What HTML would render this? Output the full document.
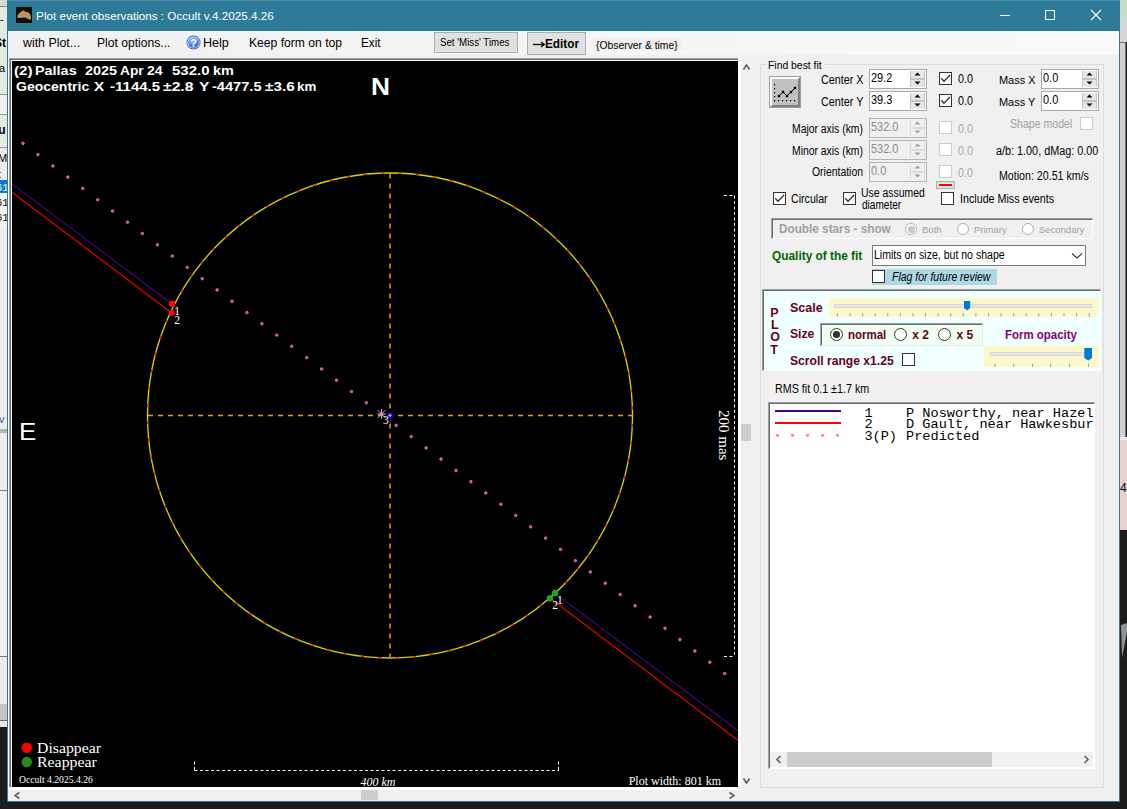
<!DOCTYPE html>
<html><head><meta charset="utf-8">
<style>
*{margin:0;padding:0;box-sizing:border-box}
html,body{width:1127px;height:809px;overflow:hidden;background:#1c1c1c;font-family:"Liberation Sans",sans-serif}
.a{position:absolute}
.t{position:absolute;white-space:pre;line-height:1}
svg.a{overflow:visible}
</style></head><body>
<div class="a" style="left:0px;top:0px;width:7px;height:6px;background:#d8d8d8;"></div>
<div class="a" style="left:0px;top:6px;width:7px;height:1px;background:#8a8a8a;"></div>
<div class="a" style="left:0px;top:7px;width:7px;height:87px;background:#e3ebe1;"></div>
<div class="a" style="left:0px;top:94px;width:7px;height:1px;background:#9a9a9a;"></div>
<div class="a" style="left:0px;top:95px;width:7px;height:19px;background:#efefef;"></div>
<div class="a" style="left:0px;top:114px;width:7px;height:1px;background:#9a9a9a;"></div>
<div class="a" style="left:0px;top:115px;width:7px;height:32px;background:#e3ebe1;"></div>
<div class="a" style="left:0px;top:147px;width:7px;height:1px;background:#9a9a9a;"></div>
<div class="a" style="left:0px;top:148px;width:7px;height:32px;background:#ececec;"></div>
<div class="a" style="left:0px;top:180px;width:7px;height:13px;background:#0a78d0;"></div>
<div class="a" style="left:0px;top:193px;width:7px;height:34px;background:#f4f4f4;"></div>
<div class="a" style="left:0px;top:227px;width:7px;height:202px;background:#eeeeee;"></div>
<div class="a" style="left:0px;top:429px;width:7px;height:4px;background:#b4b4b4;"></div>
<div class="a" style="left:0;top:410px;width:7px;height:16px;overflow:hidden"><div class="t" style="left:-1.0px;top:2.79px;font:normal normal 11px 'Liberation Sans';color:#3a5a9a;">v</div></div>
<div class="a" style="left:0px;top:433px;width:7px;height:57px;background:#ececec;"></div>
<div class="a" style="left:0px;top:490px;width:7px;height:1px;background:#7a7a7a;"></div>
<div class="a" style="left:0px;top:491px;width:7px;height:165px;background:#efefef;"></div>
<div class="a" style="left:0px;top:656px;width:7px;height:1px;background:#7a7a7a;"></div>
<div class="a" style="left:0px;top:657px;width:7px;height:47px;background:#ebebeb;"></div>
<div class="a" style="left:0px;top:704px;width:7px;height:16px;background:#c4c4c4;"></div>
<div class="a" style="left:0px;top:720px;width:7px;height:1px;background:#6a6a6a;"></div>
<div class="a" style="left:0px;top:721px;width:7px;height:6px;background:#e8e8e8;"></div>
<div class="a" style="left:0px;top:727px;width:7px;height:82px;background:#1c1c1c;"></div>
<div class="a" style="left:0;top:0;width:7px;height:240px;overflow:hidden"><div class="t" style="left:-6.0px;top:12.79px;font:normal normal 11px 'Liberation Sans';color:#000;">o-</div><div class="t" style="left:-6.0px;top:35.94px;font:normal bold 12px 'Liberation Sans';color:#000;">St</div><div class="t" style="left:-7.0px;top:61.79px;font:normal normal 11px 'Liberation Sans';color:#000;">pa</div><div class="t" style="left:-5.0px;top:122.94px;font:normal bold 12px 'Liberation Sans';color:#000;">lu</div><div class="t" style="left:-2.0px;top:151.79px;font:normal normal 11px 'Liberation Sans';color:#000;">Ma</div><div class="t" style="left:-3.0px;top:167.79px;font:normal bold 11px 'Liberation Sans';color:#000;">t</div><div class="t" style="left:-4.0px;top:182.05px;font:normal normal 10.5px 'Liberation Mono';color:#fff;">61</div><div class="t" style="left:-4.0px;top:197.05px;font:normal normal 10.5px 'Liberation Mono';color:#000;">61</div><div class="t" style="left:-4.0px;top:212.05px;font:normal normal 10.5px 'Liberation Mono';color:#000;">61</div></div>
<div class="a" style="left:1120px;top:0px;width:7px;height:21px;background:#cadbc6;"></div>
<div class="a" style="left:1120px;top:21px;width:7px;height:21px;background:#d6d6d6;"></div>
<div class="a" style="left:1120px;top:42px;width:6px;height:395px;background:#d2d2d2;border-top:1px solid #707070;border-right:1px solid #707070"></div>
<div class="a" style="left:1120px;top:437px;width:7px;height:3px;background:#ececec;"></div>
<div class="a" style="left:1120px;top:440px;width:7px;height:90px;background:#e6d0d0;"></div>
<div class="a" style="left:1120px;top:470px;width:7px;height:30px;overflow:hidden"><div class="t" style="left:0.0px;top:10.94px;font:normal normal 12px 'Liberation Sans';color:#000;">41</div></div>
<div class="a" style="left:1120px;top:530px;width:7px;height:279px;background:#1c1c1c;"></div>
<svg class="a" style="left:1120px;top:620px" width="7" height="40"><path d="M1 5L7 3V12L2 38Z" fill="#8a9499"/></svg>
<div class="a" style="left:7px;top:0px;width:1113px;height:802px;background:#f0f0f0;border:1px solid #2e7b99;border-top:none"></div>
<div class="a" style="left:7px;top:0px;width:1113px;height:31px;background:#2e7b99;"></div>
<div class="a" style="left:8px;top:31px;width:1111px;height:24px;background:#f5f5f5;background:linear-gradient(90deg,#f0f0f0,#f9f9f9);border-top:1px solid #fdfdfd"></div>
<div class="a" style="left:16px;top:7px;width:16px;height:16px;background:#120d08;"></div>
<svg class="a" style="left:16px;top:7px" width="16" height="16" viewBox="0 0 16 16"><path d="M1.2 9.8C1.5 7.5 4 5 6.5 4C7.3 3.2 8 3 8.6 4.2C9.2 5 10 5 11 4.9C13 5 14.8 7.5 15 10C15 12 14.5 13.2 13.5 12.8C12 12 10.5 10.8 8.5 10.6C6.5 10.5 4.5 11 3 10.9C2 10.9 1.1 10.6 1.2 9.8Z" fill="#b8966c"/></svg>
<div class="a" style="left:7px;top:0px;width:1113px;height:1px;background:#4a8eaa;"></div>
<div class="t" style="left:36.1px;top:8.90px;font:normal normal 11.7px 'Liberation Sans';color:#fff;">Plot event observations : Occult v.4.2025.4.26</div>
<div class="a" style="left:1000px;top:15px;width:10px;height:1px;background:#fff;"></div>
<div class="a" style="left:1045px;top:10px;width:10px;height:10px;border:1px solid #fff"></div>
<svg class="a" style="left:1090px;top:9px" width="12" height="12" viewBox="0 0 12 12"><path d="M1 1L11 11M11 1L1 11" stroke="#fff" stroke-width="1.1"/></svg>
<div class="t" style="left:22.9px;top:35.94px;font:normal normal 12px 'Liberation Sans';color:#000;transform-origin:0 0;transform:scaleX(1.031);">with Plot...</div>
<div class="t" style="left:97.4px;top:35.94px;font:normal normal 12px 'Liberation Sans';color:#000;transform-origin:0 0;transform:scaleX(1.010);">Plot options...</div>
<svg class="a" style="left:186px;top:35px" width="15" height="15" viewBox="0 0 15 15"><defs><radialGradient id="hg" cx="0.4" cy="0.3" r="0.8"><stop offset="0" stop-color="#9cc8ff"/><stop offset="1" stop-color="#1a4fc0"/></radialGradient></defs><circle cx="7.5" cy="7.5" r="7" fill="#3a64c8"/><circle cx="7.5" cy="7.5" r="6.1" fill="#e8f0ff"/><circle cx="7.5" cy="7.5" r="5.3" fill="url(#hg)"/><text x="7.5" y="11.5" font-family="Liberation Sans" font-weight="bold" font-size="11" fill="#fff" text-anchor="middle">?</text></svg>
<div class="t" style="left:203.2px;top:35.94px;font:normal normal 12px 'Liberation Sans';color:#000;transform-origin:0 0;transform:scaleX(1.048);">Help</div>
<div class="t" style="left:249.2px;top:35.94px;font:normal normal 12px 'Liberation Sans';color:#000;transform-origin:0 0;transform:scaleX(1.011);">Keep form on top</div>
<div class="t" style="left:361.0px;top:35.94px;font:normal normal 12px 'Liberation Sans';color:#000;transform-origin:0 0;transform:scaleX(0.974);">Exit</div>
<div class="a" style="left:434px;top:32px;width:84px;height:21px;background:#e1e1e1;border:1px solid #adadad"></div>
<div class="t" style="left:439.9px;top:36.74px;font:normal normal 10px 'Liberation Sans';color:#000;transform-origin:0 0;transform:scaleX(0.969);">Set 'Miss' Times</div>
<div class="a" style="left:527px;top:32px;width:59px;height:23px;background:#e1e1e1;border:1px solid #adadad"></div>
<div class="t" style="left:544.5px;top:36.54px;font:normal bold 12px 'Liberation Sans';color:#000;transform-origin:0 0;transform:scaleX(0.982);">Editor</div>
<svg class="a" style="left:532px;top:39px" width="14" height="11"><path d="M1 5.5H12" stroke="#000" stroke-width="1.3"/><path d="M9 3L12.3 5.5L9 8" stroke="#000" stroke-width="1.3" fill="none"/></svg>
<div class="a" style="left:593px;top:38px;width:89px;height:13px;background:#f0f0f0;"></div>
<div class="t" style="left:596.2px;top:38.31px;font:normal normal 11.8px 'Liberation Sans';color:#000;transform-origin:0 0;transform:scaleX(0.877);">{Observer &amp; time}</div>
<div class="a" style="left:8px;top:58px;width:733px;height:732px;background:#fff;"></div>
<div class="a" style="left:9px;top:58px;width:729px;height:1px;background:#a0a0a0;"></div>
<div class="a" style="left:9px;top:58px;width:1px;height:729px;background:#a0a0a0;"></div>
<div class="a" style="left:10px;top:59px;width:728px;height:1px;background:#696969;"></div>
<div class="a" style="left:10px;top:59px;width:1px;height:728px;background:#696969;"></div>
<div class="a" style="left:12px;top:61px;width:726px;height:726px;background:#000;"></div>
<div class="a" style="left:361px;top:790px;width:17px;height:10px;background:#cdcdcd;"></div>
<div class="a" style="left:741px;top:424px;width:10px;height:17px;background:#cdcdcd;"></div>
<svg class="a" style="left:0;top:0" width="1127" height="809"><g fill="none" stroke="#606060" stroke-width="1.6">
<path d="M19.5 792.5L15 795.5L19.5 798.5"/><path d="M729.5 792.5L734 795.5L729.5 798.5"/>
<path d="M743.5 69.5L746.5 65L749.5 69.5"/><path d="M743.5 778.5L746.5 783L749.5 778.5"/></g></svg>
<svg class="a" style="left:0;top:0" width="1127" height="809" viewBox="0 0 1127 809">
<defs><clipPath id="cv"><rect x="12" y="61" width="726" height="726"/></clipPath></defs>
<g clip-path="url(#cv)">
<circle cx="390" cy="415.5" r="242.5" fill="none" stroke="#d4d400" stroke-width="1.35"/>
<circle cx="390" cy="415.5" r="242.5" fill="none" stroke="#e82000" stroke-width="1.35" stroke-dasharray="3.4 13.9" stroke-dashoffset="-8.7"/>
<line x1="390" y1="173.5" x2="390" y2="658" stroke="#d88800" stroke-width="1.7" stroke-dasharray="5 5"/>
<line x1="148" y1="415.5" x2="632.5" y2="415.5" stroke="#f8a000" stroke-width="1.7" stroke-dasharray="5 5"/>
<line x1="12" y1="183.9" x2="170" y2="302.5" stroke="#48008a" stroke-width="1.1"/>
<line x1="12" y1="192.2" x2="170" y2="311.7" stroke="#e80000" stroke-width="1.15"/>
<line x1="558" y1="595.6" x2="738" y2="730.7" stroke="#48008a" stroke-width="1.1"/>
<line x1="552" y1="599.7" x2="738" y2="740.3" stroke="#e80000" stroke-width="1.15"/>
<g fill="#b04890" stroke="#ff70c8" stroke-width="0.9"><circle cx="23.0" cy="143.3" r="1.25"/><circle cx="37.9" cy="154.6" r="1.25"/><circle cx="52.9" cy="165.9" r="1.25"/><circle cx="67.8" cy="177.1" r="1.25"/><circle cx="82.7" cy="188.4" r="1.25"/><circle cx="97.7" cy="199.7" r="1.25"/><circle cx="112.6" cy="211.0" r="1.25"/><circle cx="127.5" cy="222.3" r="1.25"/><circle cx="142.4" cy="233.5" r="1.25"/><circle cx="157.4" cy="244.8" r="1.25"/><circle cx="172.3" cy="256.1" r="1.25"/><circle cx="187.2" cy="267.4" r="1.25"/><circle cx="202.2" cy="278.7" r="1.25"/><circle cx="217.1" cy="289.9" r="1.25"/><circle cx="232.0" cy="301.2" r="1.25"/><circle cx="246.9" cy="312.5" r="1.25"/><circle cx="261.9" cy="323.8" r="1.25"/><circle cx="276.8" cy="335.1" r="1.25"/><circle cx="291.7" cy="346.3" r="1.25"/><circle cx="306.7" cy="357.6" r="1.25"/><circle cx="321.6" cy="368.9" r="1.25"/><circle cx="336.5" cy="380.2" r="1.25"/><circle cx="351.5" cy="391.5" r="1.25"/><circle cx="366.4" cy="402.7" r="1.25"/><circle cx="381.3" cy="414.0" r="1.25"/><circle cx="396.2" cy="425.3" r="1.25"/><circle cx="411.2" cy="436.6" r="1.25"/><circle cx="426.1" cy="447.9" r="1.25"/><circle cx="441.0" cy="459.1" r="1.25"/><circle cx="456.0" cy="470.4" r="1.25"/><circle cx="470.9" cy="481.7" r="1.25"/><circle cx="485.8" cy="493.0" r="1.25"/><circle cx="500.8" cy="504.3" r="1.25"/><circle cx="515.7" cy="515.5" r="1.25"/><circle cx="530.6" cy="526.8" r="1.25"/><circle cx="545.5" cy="538.1" r="1.25"/><circle cx="560.5" cy="549.4" r="1.25"/><circle cx="575.4" cy="560.7" r="1.25"/><circle cx="590.3" cy="571.9" r="1.25"/><circle cx="605.3" cy="583.2" r="1.25"/><circle cx="620.2" cy="594.5" r="1.25"/><circle cx="635.1" cy="605.8" r="1.25"/><circle cx="650.1" cy="617.1" r="1.25"/><circle cx="665.0" cy="628.3" r="1.25"/><circle cx="679.9" cy="639.6" r="1.25"/><circle cx="694.9" cy="650.9" r="1.25"/><circle cx="709.8" cy="662.2" r="1.25"/><circle cx="724.7" cy="673.5" r="1.25"/></g>
<circle cx="172" cy="303.7" r="3.3" fill="#ff0000"/>
<circle cx="172" cy="313.1" r="3" fill="#ff0000"/>
<circle cx="555.2" cy="593" r="3.2" fill="#1aa81a"/>
<circle cx="550" cy="598.2" r="3.2" fill="#1aa81a"/>
<g stroke="#b0b0b0" stroke-width="1">
<line x1="377.5" y1="410" x2="385.5" y2="418"/><line x1="385.5" y1="410" x2="377.5" y2="418"/>
<line x1="381.5" y1="409" x2="381.5" y2="419"/><line x1="377" y1="414" x2="386" y2="414"/>
</g>
<circle cx="381.5" cy="414" r="1.8" fill="#ff80c0"/>
<circle cx="390" cy="415.3" r="2.6" fill="none" stroke="#0000ff" stroke-width="1.6"/>
<g stroke="#fff" stroke-width="1" fill="none" stroke-dasharray="3 2.5">
<line x1="734.5" y1="195.5" x2="734.5" y2="656.5"/>
<line x1="724" y1="195.5" x2="734.5" y2="195.5"/>
<line x1="724" y1="656.5" x2="734.5" y2="656.5"/>
<line x1="194.5" y1="770.5" x2="559" y2="770.5"/>
<line x1="194.5" y1="761.5" x2="194.5" y2="770.5"/>
<line x1="558.5" y1="761.5" x2="558.5" y2="770.5"/>
</g>
<circle cx="26.8" cy="747.7" r="5.2" fill="#ff0000"/>
<circle cx="26.8" cy="762" r="5.2" fill="#228b22"/>
</g></svg>
<div class="t" style="left:14.3px;top:62.93px;font:normal bold 13.2px 'Liberation Sans';color:#fff;transform-origin:0 0;transform:scaleX(1.153);">(2)</div>
<div class="t" style="left:35.4px;top:62.93px;font:normal bold 13.2px 'Liberation Sans';color:#fff;transform-origin:0 0;transform:scaleX(1.092);">Pallas</div>
<div class="t" style="left:85.2px;top:62.93px;font:normal bold 13.2px 'Liberation Sans';color:#fff;transform-origin:0 0;transform:scaleX(1.093);">2025</div>
<div class="t" style="left:119.8px;top:62.93px;font:normal bold 13.2px 'Liberation Sans';color:#fff;transform-origin:0 0;transform:scaleX(1.039);">Apr</div>
<div class="t" style="left:146.9px;top:62.93px;font:normal bold 13.2px 'Liberation Sans';color:#fff;transform-origin:0 0;transform:scaleX(1.067);">24</div>
<div class="t" style="left:172.2px;top:62.93px;font:normal bold 13.2px 'Liberation Sans';color:#fff;transform-origin:0 0;transform:scaleX(1.137);">532.0</div>
<div class="t" style="left:212.6px;top:62.93px;font:normal bold 13.2px 'Liberation Sans';color:#fff;transform-origin:0 0;transform:scaleX(1.094);">km</div>
<div class="t" style="left:15.5px;top:78.93px;font:normal bold 13.2px 'Liberation Sans';color:#fff;transform-origin:0 0;transform:scaleX(1.063);">Geocentric</div>
<div class="t" style="left:93.7px;top:78.93px;font:normal bold 13.2px 'Liberation Sans';color:#fff;transform-origin:0 0;transform:scaleX(1.156);">X</div>
<div class="t" style="left:109.9px;top:78.93px;font:normal bold 13.2px 'Liberation Sans';color:#fff;transform-origin:0 0;transform:scaleX(1.139);">-1144.5</div>
<div class="t" style="left:163.1px;top:78.93px;font:normal bold 13.2px 'Liberation Sans';color:#fff;transform-origin:0 0;transform:scaleX(1.192);">±2.8</div>
<div class="t" style="left:198.5px;top:78.93px;font:normal bold 13.2px 'Liberation Sans';color:#fff;transform-origin:0 0;transform:scaleX(1.189);">Y</div>
<div class="t" style="left:212.1px;top:78.93px;font:normal bold 13.2px 'Liberation Sans';color:#fff;transform-origin:0 0;transform:scaleX(1.107);">-4477.5</div>
<div class="t" style="left:264.9px;top:78.93px;font:normal bold 13.2px 'Liberation Sans';color:#fff;transform-origin:0 0;transform:scaleX(1.160);">±3.6</div>
<div class="t" style="left:296.9px;top:78.93px;font:normal bold 13.2px 'Liberation Sans';color:#fff;transform-origin:0 0;transform:scaleX(1.012);">km</div>
<div class="t" style="left:371.1px;top:74.18px;font:normal bold 23.3px 'Liberation Sans';color:#fff;transform-origin:0 0;transform:scaleX(1.129);">N</div>
<div class="t" style="left:19.3px;top:419.28px;font:normal normal 23.3px 'Liberation Sans';color:#fff;transform-origin:0 0;transform:scaleX(1.115);">E</div>
<div class="t" style="left:174.2px;top:305.07px;font:normal normal 11.5px 'Liberation Serif';color:#fff;">1</div>
<div class="t" style="left:174.2px;top:314.47px;font:normal normal 11.5px 'Liberation Serif';color:#fff;">2</div>
<div class="t" style="left:557.0px;top:594.27px;font:normal normal 11.5px 'Liberation Serif';color:#fff;">1</div>
<div class="t" style="left:552.2px;top:599.47px;font:normal normal 11.5px 'Liberation Serif';color:#fff;">2</div>
<div class="t" style="left:382.9px;top:414.37px;font:normal normal 11.5px 'Liberation Serif';color:#fff;">3</div>
<div class="t" style="left:36.7px;top:739.50px;font:normal normal 14.8px 'Liberation Serif';color:#fff;transform-origin:0 0;transform:scaleX(1.068);">Disappear</div>
<div class="t" style="left:36.7px;top:753.71px;font:normal normal 14.8px 'Liberation Serif';color:#fff;transform-origin:0 0;transform:scaleX(1.071);">Reappear</div>
<div class="t" style="left:19.2px;top:772.97px;font:normal normal 10.9px 'Liberation Serif';color:#fff;transform-origin:0 0;transform:scaleX(0.884);">Occult 4.2025.4.26</div>
<div class="t" style="left:360.5px;top:775.05px;font:italic normal 12px 'Liberation Serif';color:#fff;">400 km</div>
<div class="t" style="left:628.7px;top:773.75px;font:normal normal 12px 'Liberation Serif';color:#fff;">Plot width: 801 km</div>
<div class="a" style="left:729.7px;top:409.7px;width:0;height:0"><div style="position:absolute;left:0;top:0;transform-origin:0 0;transform:rotate(90deg)"><div class="t" style="left:0.0px;top:-1.76px;font:normal normal 15px 'Liberation Serif';color:#fff;">200 mas</div></div></div>
<div class="a" style="left:760px;top:64px;width:344px;height:724px;border:1px solid #dcdcdc"></div>
<div class="a" style="left:766px;top:58px;width:59px;height:12px;background:#f0f0f0;"></div>
<div class="t" style="left:768.4px;top:57.71px;font:normal normal 11.8px 'Liberation Sans';color:#000;transform-origin:0 0;transform:scaleX(0.880);">Find best fit</div>
<div class="a" style="left:769px;top:76px;width:32px;height:32px;background:#c0c0c0;border:1px solid #a0a0a0"></div>
<div class="a" style="left:770px;top:77px;width:30px;height:30px;border-top:2px solid #fff;border-left:2px solid #fff;border-right:2px solid #808080;border-bottom:2px solid #808080"></div>
<svg class="a" style="left:0;top:0" width="1127" height="809"><g fill="#000"><rect x="774" y="100" width="1.2" height="1.2"/><rect x="778" y="100" width="1.2" height="1.2"/><rect x="782" y="100" width="1.2" height="1.2"/><rect x="786" y="100" width="1.2" height="1.2"/><rect x="790" y="100" width="1.2" height="1.2"/><rect x="794" y="100" width="1.2" height="1.2"/><rect x="774" y="84" width="1.2" height="1.2"/><rect x="774" y="88" width="1.2" height="1.2"/><rect x="774" y="92" width="1.2" height="1.2"/><rect x="774" y="96" width="1.2" height="1.2"/><rect x="774" y="100" width="1.2" height="1.2"/></g><path d="M779 96L783 92L787 96L791 92L795 88" stroke="#000" stroke-width="1" fill="none"/><g fill="#000"><rect x="777.8" y="94.8" width="2.4" height="2.4"/><rect x="781.8" y="90.8" width="2.4" height="2.4"/><rect x="785.8" y="94.8" width="2.4" height="2.4"/><rect x="789.8" y="90.8" width="2.4" height="2.4"/><rect x="793.8" y="86.8" width="2.4" height="2.4"/></g></svg>
<div class="t" style="left:820.9px;top:72.74px;font:normal normal 12px 'Liberation Sans';color:#000;transform-origin:0 0;transform:scaleX(0.898);">Center X</div>
<div class="t" style="left:820.9px;top:94.74px;font:normal normal 12px 'Liberation Sans';color:#000;transform-origin:0 0;transform:scaleX(0.898);">Center Y</div>
<div class="a" style="left:869px;top:69px;width:58px;height:20px;background:#fff;border:1px solid #a9a9a9"></div>
<div class="a" style="left:910px;top:71px;width:15px;height:16px;background:#e6e6e6;border-left:1px solid #c4c4c4;border-right:1px solid #c4c4c4"></div>
<div class="a" style="left:910px;top:78px;width:15px;height:2px;background:#c4c4c4;"></div>
<svg class="a" style="left:910px;top:69px" width="15" height="20" viewBox="0 0 15 20"><path d="M4.5 6.5L7.5 3.5L10.5 6.5Z M4.5 12.5L7.5 15.5L10.5 12.5Z" fill="#000"/></svg>
<div class="t" style="left:871.0px;top:70.77px;font:normal normal 12.2px 'Liberation Sans';color:#000;transform-origin:0 0;transform:scaleX(0.9)">29.2</div>
<div class="a" style="left:869px;top:91px;width:58px;height:20px;background:#fff;border:1px solid #a9a9a9"></div>
<div class="a" style="left:910px;top:93px;width:15px;height:16px;background:#e6e6e6;border-left:1px solid #c4c4c4;border-right:1px solid #c4c4c4"></div>
<div class="a" style="left:910px;top:100px;width:15px;height:2px;background:#c4c4c4;"></div>
<svg class="a" style="left:910px;top:91px" width="15" height="20" viewBox="0 0 15 20"><path d="M4.5 6.5L7.5 3.5L10.5 6.5Z M4.5 12.5L7.5 15.5L10.5 12.5Z" fill="#000"/></svg>
<div class="t" style="left:871.0px;top:92.77px;font:normal normal 12.2px 'Liberation Sans';color:#000;transform-origin:0 0;transform:scaleX(0.9)">39.3</div>
<div class="a" style="left:939px;top:72px;width:13px;height:13px;background:#fff;border:1px solid #333"></div>
<svg class="a" style="left:939px;top:72px" width="13" height="13" viewBox="0 0 13 13"><path d="M2.2 6.3L5 9.3L11 3" stroke="#333" stroke-width="1.3" fill="none"/></svg>
<div class="a" style="left:939px;top:94px;width:13px;height:13px;background:#fff;border:1px solid #333"></div>
<svg class="a" style="left:939px;top:94px" width="13" height="13" viewBox="0 0 13 13"><path d="M2.2 6.3L5 9.3L11 3" stroke="#333" stroke-width="1.3" fill="none"/></svg>
<div class="t" style="left:957.9px;top:71.97px;font:normal normal 12.2px 'Liberation Sans';color:#000;transform-origin:0 0;transform:scaleX(0.882);">0.0</div>
<div class="t" style="left:957.9px;top:93.97px;font:normal normal 12.2px 'Liberation Sans';color:#000;transform-origin:0 0;transform:scaleX(0.882);">0.0</div>
<div class="t" style="left:999.0px;top:73.92px;font:normal normal 11.2px 'Liberation Sans';color:#000;transform-origin:0 0;transform:scaleX(0.978);">Mass X</div>
<div class="t" style="left:999.0px;top:95.92px;font:normal normal 11.2px 'Liberation Sans';color:#000;transform-origin:0 0;transform:scaleX(0.978);">Mass Y</div>
<div class="a" style="left:1041px;top:69px;width:58px;height:20px;background:#fff;border:1px solid #a9a9a9"></div>
<div class="a" style="left:1082px;top:71px;width:15px;height:16px;background:#e6e6e6;border-left:1px solid #c4c4c4;border-right:1px solid #c4c4c4"></div>
<div class="a" style="left:1082px;top:78px;width:15px;height:2px;background:#c4c4c4;"></div>
<svg class="a" style="left:1082px;top:69px" width="15" height="20" viewBox="0 0 15 20"><path d="M4.5 6.5L7.5 3.5L10.5 6.5Z M4.5 12.5L7.5 15.5L10.5 12.5Z" fill="#000"/></svg>
<div class="t" style="left:1043.0px;top:70.77px;font:normal normal 12.2px 'Liberation Sans';color:#000;transform-origin:0 0;transform:scaleX(0.9)">0.0</div>
<div class="a" style="left:1041px;top:91px;width:58px;height:20px;background:#fff;border:1px solid #a9a9a9"></div>
<div class="a" style="left:1082px;top:93px;width:15px;height:16px;background:#e6e6e6;border-left:1px solid #c4c4c4;border-right:1px solid #c4c4c4"></div>
<div class="a" style="left:1082px;top:100px;width:15px;height:2px;background:#c4c4c4;"></div>
<svg class="a" style="left:1082px;top:91px" width="15" height="20" viewBox="0 0 15 20"><path d="M4.5 6.5L7.5 3.5L10.5 6.5Z M4.5 12.5L7.5 15.5L10.5 12.5Z" fill="#000"/></svg>
<div class="t" style="left:1043.0px;top:92.77px;font:normal normal 12.2px 'Liberation Sans';color:#000;transform-origin:0 0;transform:scaleX(0.9)">0.0</div>
<div class="t" style="left:792.2px;top:121.94px;font:normal normal 12px 'Liberation Sans';color:#000;transform-origin:0 0;transform:scaleX(0.865);">Major axis (km)</div>
<div class="t" style="left:792.2px;top:143.64px;font:normal normal 12px 'Liberation Sans';color:#000;transform-origin:0 0;transform:scaleX(0.865);">Minor axis (km)</div>
<div class="t" style="left:811.9px;top:164.64px;font:normal normal 12px 'Liberation Sans';color:#000;transform-origin:0 0;transform:scaleX(0.869);">Orientation</div>
<div class="a" style="left:869px;top:118px;width:58px;height:20px;background:#f0f0f0;border:1px solid #b4b4b4"></div>
<div class="a" style="left:910px;top:120px;width:15px;height:16px;background:#f0f0f0;border-left:1px solid #dcdcdc;border-right:1px solid #dcdcdc"></div>
<div class="a" style="left:910px;top:127px;width:15px;height:2px;background:#dcdcdc;"></div>
<svg class="a" style="left:910px;top:118px" width="15" height="20" viewBox="0 0 15 20"><path d="M4.5 6.5L7.5 3.5L10.5 6.5Z M4.5 12.5L7.5 15.5L10.5 12.5Z" fill="#a0a0a0"/></svg>
<div class="t" style="left:871.0px;top:119.77px;font:normal normal 12.2px 'Liberation Sans';color:#8a8a8a;transform-origin:0 0;transform:scaleX(0.9)">532.0</div>
<div class="a" style="left:869px;top:140px;width:58px;height:20px;background:#f0f0f0;border:1px solid #b4b4b4"></div>
<div class="a" style="left:910px;top:142px;width:15px;height:16px;background:#f0f0f0;border-left:1px solid #dcdcdc;border-right:1px solid #dcdcdc"></div>
<div class="a" style="left:910px;top:149px;width:15px;height:2px;background:#dcdcdc;"></div>
<svg class="a" style="left:910px;top:140px" width="15" height="20" viewBox="0 0 15 20"><path d="M4.5 6.5L7.5 3.5L10.5 6.5Z M4.5 12.5L7.5 15.5L10.5 12.5Z" fill="#a0a0a0"/></svg>
<div class="t" style="left:871.0px;top:141.77px;font:normal normal 12.2px 'Liberation Sans';color:#8a8a8a;transform-origin:0 0;transform:scaleX(0.9)">532.0</div>
<div class="a" style="left:869px;top:162px;width:58px;height:20px;background:#f0f0f0;border:1px solid #b4b4b4"></div>
<div class="a" style="left:910px;top:164px;width:15px;height:16px;background:#f0f0f0;border-left:1px solid #dcdcdc;border-right:1px solid #dcdcdc"></div>
<div class="a" style="left:910px;top:171px;width:15px;height:2px;background:#dcdcdc;"></div>
<svg class="a" style="left:910px;top:162px" width="15" height="20" viewBox="0 0 15 20"><path d="M4.5 6.5L7.5 3.5L10.5 6.5Z M4.5 12.5L7.5 15.5L10.5 12.5Z" fill="#a0a0a0"/></svg>
<div class="t" style="left:871.0px;top:163.77px;font:normal normal 12.2px 'Liberation Sans';color:#8a8a8a;transform-origin:0 0;transform:scaleX(0.9)">0.0</div>
<div class="a" style="left:939px;top:121px;width:13px;height:13px;background:#fff;border:1px solid #cccccc"></div>
<div class="t" style="left:957.9px;top:121.57px;font:normal normal 12.2px 'Liberation Sans';color:#a8a8a8;transform-origin:0 0;transform:scaleX(0.882);">0.0</div>
<div class="a" style="left:939px;top:143px;width:13px;height:13px;background:#fff;border:1px solid #cccccc"></div>
<div class="t" style="left:957.9px;top:143.57px;font:normal normal 12.2px 'Liberation Sans';color:#a8a8a8;transform-origin:0 0;transform:scaleX(0.882);">0.0</div>
<div class="a" style="left:939px;top:165px;width:13px;height:13px;background:#fff;border:1px solid #cccccc"></div>
<div class="t" style="left:957.9px;top:165.57px;font:normal normal 12.2px 'Liberation Sans';color:#a8a8a8;transform-origin:0 0;transform:scaleX(0.882);">0.0</div>
<div class="t" style="left:1009.6px;top:116.84px;font:normal normal 12px 'Liberation Sans';color:#a0a0a0;transform-origin:0 0;transform:scaleX(0.880);">Shape model</div>
<div class="a" style="left:1080px;top:117px;width:13px;height:13px;background:#fff;border:1px solid #cccccc"></div>
<div class="t" style="left:995.8px;top:143.74px;font:normal normal 12px 'Liberation Sans';color:#000;transform-origin:0 0;transform:scaleX(0.902);">a/b: 1.00, dMag: 0.00</div>
<div class="t" style="left:999.4px;top:168.74px;font:normal normal 12px 'Liberation Sans';color:#000;transform-origin:0 0;transform:scaleX(0.887);">Motion: 20.51 km/s</div>
<div class="a" style="left:936px;top:181px;width:19px;height:8px;background:#e1e1e1;border:1px solid #adadad"></div>
<div class="a" style="left:939px;top:184px;width:13px;height:2px;background:#ff0000;"></div>
<div class="a" style="left:773px;top:192px;width:13px;height:13px;background:#fff;border:1px solid #333"></div>
<svg class="a" style="left:773px;top:192px" width="13" height="13" viewBox="0 0 13 13"><path d="M2.2 6.3L5 9.3L11 3" stroke="#333" stroke-width="1.3" fill="none"/></svg>
<div class="t" style="left:790.7px;top:191.64px;font:normal normal 12px 'Liberation Sans';color:#000;transform-origin:0 0;transform:scaleX(0.885);">Circular</div>
<div class="a" style="left:843px;top:192px;width:13px;height:13px;background:#fff;border:1px solid #333"></div>
<svg class="a" style="left:843px;top:192px" width="13" height="13" viewBox="0 0 13 13"><path d="M2.2 6.3L5 9.3L11 3" stroke="#333" stroke-width="1.3" fill="none"/></svg>
<div class="t" style="left:861.2px;top:185.54px;font:normal normal 12px 'Liberation Sans';color:#000;transform-origin:0 0;transform:scaleX(0.869);">Use assumed</div>
<div class="t" style="left:862.1px;top:198.14px;font:normal normal 12px 'Liberation Sans';color:#000;transform-origin:0 0;transform:scaleX(0.840);">diameter</div>
<div class="a" style="left:941px;top:192px;width:13px;height:13px;background:#fff;border:1px solid #333"></div>
<div class="t" style="left:959.5px;top:191.64px;font:normal normal 12px 'Liberation Sans';color:#000;transform-origin:0 0;transform:scaleX(0.893);">Include Miss events</div>
<div class="a" style="left:771px;top:218px;width:322px;height:21px;background:#f0f0f0;border-top:2px solid #a0a0a0;border-left:2px solid #a0a0a0;border-bottom:1px solid #fff;border-right:1px solid #fff"></div>
<div class="a" style="left:772px;top:219px;width:320px;height:1px;background:#696969;"></div>
<div class="a" style="left:772px;top:219px;width:1px;height:19px;background:#696969;"></div>
<div class="a" style="left:773px;top:220px;width:319px;height:1px;background:#fafafa;"></div>
<div class="a" style="left:773px;top:220px;width:1px;height:18px;background:#fafafa;"></div>
<div class="t" style="left:778.5px;top:221.64px;font:normal bold 12px 'Liberation Sans';color:#a0a0a0;transform-origin:0 0;transform:scaleX(0.980);">Double stars - show</div>
<div class="a" style="left:905.3px;top:223.3px;width:12.2px;height:12.2px;border-radius:50%;background:#fff;border:1px solid #b4b4b4"></div>
<div class="a" style="left:908.2px;top:226.2px;width:6.4px;height:6.4px;border-radius:50%;background:#c8c8c8"></div>
<div class="t" style="left:922.4px;top:224.83px;font:normal normal 9.3px 'Liberation Sans';color:#a0a0a0;transform-origin:0 0;transform:scaleX(1.028);">Both</div>
<div class="a" style="left:956.8px;top:223.3px;width:12.2px;height:12.2px;border-radius:50%;background:#fff;border:1px solid #b4b4b4"></div>
<div class="t" style="left:974.0px;top:225.23px;font:normal normal 9.3px 'Liberation Sans';color:#a0a0a0;transform-origin:0 0;transform:scaleX(1.023);">Primary</div>
<div class="a" style="left:1021.9px;top:223.3px;width:12.2px;height:12.2px;border-radius:50%;background:#fff;border:1px solid #b4b4b4"></div>
<div class="t" style="left:1038.9px;top:225.23px;font:normal normal 9.3px 'Liberation Sans';color:#a0a0a0;transform-origin:0 0;transform:scaleX(1.019);">Secondary</div>
<div class="t" style="left:772.0px;top:249.34px;font:normal bold 12px 'Liberation Sans';color:#006400;transform-origin:0 0;transform:scaleX(0.989);">Quality of the fit</div>
<div class="a" style="left:872px;top:245px;width:214px;height:21px;background:#fff;border:1px solid #7a7a7a"></div>
<div class="t" style="left:874.4px;top:247.64px;font:normal normal 12px 'Liberation Sans';color:#000;transform-origin:0 0;transform:scaleX(0.878);">Limits on size, but no shape</div>
<svg class="a" style="left:1071px;top:252px" width="12" height="8"><path d="M1 1.5L6 6L11 1.5" stroke="#333" stroke-width="1.1" fill="none"/></svg>
<div class="a" style="left:872px;top:269px;width:125px;height:16px;background:#add8e6;"></div>
<div class="a" style="left:872px;top:270px;width:13px;height:13px;background:#fff;border:1px solid #333"></div>
<div class="t" style="left:891.8px;top:269.94px;font:italic normal 12px 'Liberation Sans';color:#000;transform-origin:0 0;transform:scaleX(0.873);">Flag for future review</div>
<div class="a" style="left:762px;top:289px;width:339px;height:82px;background:#f0ffff;border-top:2px solid #a0a0a0;border-left:2px solid #a0a0a0;border-bottom:1px solid #fff;border-right:1px solid #fff"></div>
<div class="a" style="left:763px;top:290px;width:337px;height:1px;background:#696969;"></div>
<div class="a" style="left:763px;top:290px;width:1px;height:80px;background:#696969;"></div>
<div class="t" style="left:770.2px;top:306.02px;font:normal bold 12.5px 'Liberation Sans';color:#660022;">P</div>
<div class="t" style="left:771.0px;top:318.22px;font:normal bold 12.5px 'Liberation Sans';color:#660022;">L</div>
<div class="t" style="left:770.2px;top:330.42px;font:normal bold 12.5px 'Liberation Sans';color:#660022;">O</div>
<div class="t" style="left:770.2px;top:342.62px;font:normal bold 12.5px 'Liberation Sans';color:#660022;">T</div>
<div class="t" style="left:789.5px;top:300.94px;font:normal bold 12px 'Liberation Sans';color:#660022;transform-origin:0 0;transform:scaleX(1.043);">Scale</div>
<div class="t" style="left:789.5px;top:327.24px;font:normal bold 12px 'Liberation Sans';color:#660022;transform-origin:0 0;transform:scaleX(1.013);">Size</div>
<div class="t" style="left:790.4px;top:353.54px;font:normal bold 12px 'Liberation Sans';color:#660022;transform-origin:0 0;transform:scaleX(1.009);">Scroll range x1.25</div>
<div class="a" style="left:829px;top:298px;width:269px;height:19px;background:#fdf8cc;"></div>
<div class="a" style="left:834px;top:303.5px;width:258px;height:4px;background:#e7e7e7;border:1px solid #d6d6d6"></div>
<svg class="a" style="left:0;top:0" width="1127" height="809"><g stroke="#a0a0a0" stroke-width="1"><line x1="837.4" y1="313" x2="837.4" y2="316.5"/><line x1="850.0" y1="313" x2="850.0" y2="316.5"/><line x1="862.6" y1="313" x2="862.6" y2="316.5"/><line x1="875.2" y1="313" x2="875.2" y2="316.5"/><line x1="887.8" y1="313" x2="887.8" y2="316.5"/><line x1="900.4" y1="313" x2="900.4" y2="316.5"/><line x1="912.9" y1="313" x2="912.9" y2="316.5"/><line x1="925.5" y1="313" x2="925.5" y2="316.5"/><line x1="938.1" y1="313" x2="938.1" y2="316.5"/><line x1="950.7" y1="313" x2="950.7" y2="316.5"/><line x1="963.3" y1="313" x2="963.3" y2="316.5"/><line x1="975.9" y1="313" x2="975.9" y2="316.5"/><line x1="988.5" y1="313" x2="988.5" y2="316.5"/><line x1="1001.1" y1="313" x2="1001.1" y2="316.5"/><line x1="1013.7" y1="313" x2="1013.7" y2="316.5"/><line x1="1026.2" y1="313" x2="1026.2" y2="316.5"/><line x1="1038.8" y1="313" x2="1038.8" y2="316.5"/><line x1="1051.4" y1="313" x2="1051.4" y2="316.5"/><line x1="1064.0" y1="313" x2="1064.0" y2="316.5"/><line x1="1076.6" y1="313" x2="1076.6" y2="316.5"/><line x1="1089.2" y1="313" x2="1089.2" y2="317"/></g><path d="M964 301H970.2V308L967.1 310.5L964 308Z" fill="#0078d7"/></svg>
<div class="a" style="left:820px;top:323px;width:163px;height:23px;background:#f0fff0;border-top:2px solid #a0a0a0;border-left:2px solid #a0a0a0;border-bottom:1px solid #e8e8e8;border-right:1px solid #e8e8e8"></div>
<div class="a" style="left:821px;top:324px;width:161px;height:1px;background:#696969;"></div>
<div class="a" style="left:821px;top:324px;width:1px;height:21px;background:#696969;"></div>
<div class="a" style="left:822px;top:325px;width:160px;height:1px;background:#fbfffb;"></div>
<div class="a" style="left:822px;top:325px;width:1px;height:20px;background:#fbfffb;"></div>
<div class="a" style="left:830px;top:328px;width:13px;height:13px;border-radius:50%;background:#fff;border:1px solid #333"></div>
<div class="a" style="left:833.3px;top:331.3px;width:6.4px;height:6.4px;border-radius:50%;background:#333"></div>
<div class="t" style="left:847.9px;top:328.34px;font:normal bold 12px 'Liberation Sans';color:#660022;transform-origin:0 0;transform:scaleX(0.955);">normal</div>
<div class="a" style="left:894px;top:328px;width:13px;height:13px;border-radius:50%;background:#fff;border:1px solid #333"></div>
<div class="t" style="left:912.3px;top:328.34px;font:normal bold 12px 'Liberation Sans';color:#660022;">x 2</div>
<div class="a" style="left:938px;top:328px;width:13px;height:13px;border-radius:50%;background:#fff;border:1px solid #333"></div>
<div class="t" style="left:956.5px;top:328.34px;font:normal bold 12px 'Liberation Sans';color:#660022;">x 5</div>
<div class="t" style="left:1004.8px;top:328.14px;font:normal bold 12px 'Liberation Sans';color:#800080;transform-origin:0 0;transform:scaleX(0.954);">Form opacity</div>
<div class="a" style="left:984px;top:346px;width:115px;height:21px;background:#fdf8cc;"></div>
<div class="a" style="left:990px;top:352px;width:101px;height:4px;background:#e7e7e7;border:1px solid #d6d6d6"></div>
<svg class="a" style="left:0;top:0" width="1127" height="809"><g stroke="#a0a0a0" stroke-width="1"><line x1="995" y1="363.5" x2="995" y2="367"/><line x1="1013.7" y1="363.5" x2="1013.7" y2="367"/><line x1="1032.5" y1="363.5" x2="1032.5" y2="367"/><line x1="1050.5" y1="363.5" x2="1050.5" y2="367"/><line x1="1069.6" y1="363.5" x2="1069.6" y2="367"/><line x1="1088.5" y1="363.5" x2="1088.5" y2="367"/></g><path d="M1084.3 348H1092V358L1088.2 360.5L1084.3 358Z" fill="#0078d7"/></svg>
<div class="a" style="left:902px;top:353px;width:13px;height:13px;background:#fff;border:1px solid #333"></div>
<div class="t" style="left:775.2px;top:381.94px;font:normal normal 12px 'Liberation Sans';color:#000;transform-origin:0 0;transform:scaleX(0.895);">RMS fit 0.1 ±1.7 km</div>
<div class="a" style="left:768px;top:402px;width:327px;height:367px;background:#fff;border-top:2px solid #a0a0a0;border-left:2px solid #a0a0a0;border-bottom:1px solid #fff;border-right:1px solid #fff"></div>
<div class="a" style="left:769px;top:403px;width:325px;height:1px;background:#696969;"></div>
<div class="a" style="left:769px;top:403px;width:1px;height:365px;background:#696969;"></div>
<div class="a" style="left:775px;top:410px;width:66px;height:2px;background:#4b0082;"></div>
<div class="a" style="left:775px;top:422px;width:66px;height:2px;background:#ff0000;"></div>
<svg class="a" style="left:0;top:0" width="1127" height="809"><g fill="#ff66cc" stroke="#ff99dd" stroke-width="0.5"><circle cx="777.5" cy="435.3" r="1.4"/><circle cx="792.5" cy="435.3" r="1.4"/><circle cx="807.5" cy="435.3" r="1.4"/><circle cx="822.6" cy="435.3" r="1.4"/><circle cx="837.6" cy="435.3" r="1.4"/></g></svg>
<div class="a" style="left:770px;top:404px;width:323px;height:348px;overflow:hidden"><div class="t" style="left:94.4px;top:1.68px;font:normal normal 13.6px 'Liberation Mono';color:#000;">1</div><div class="t" style="left:136.0px;top:1.68px;font:normal normal 13.6px 'Liberation Mono';color:#000;">P Nosworthy, near Hazelbrook</div><div class="t" style="left:94.4px;top:13.48px;font:normal normal 13.6px 'Liberation Mono';color:#000;">2</div><div class="t" style="left:136.0px;top:13.48px;font:normal normal 13.6px 'Liberation Mono';color:#000;">D Gault, near Hawkesbury</div><div class="t" style="left:94.4px;top:25.28px;font:normal normal 13.6px 'Liberation Mono';color:#000;">3(P)</div><div class="t" style="left:136.0px;top:25.28px;font:normal normal 13.6px 'Liberation Mono';color:#000;">Predicted</div></div>
<div class="a" style="left:770px;top:752px;width:323px;height:15px;background:#f0f0f0;"></div>
<div class="a" style="left:787px;top:752px;width:205px;height:15px;background:#cdcdcd;"></div>
<svg class="a" style="left:0;top:0" width="1127" height="809"><g fill="none" stroke="#606060" stroke-width="1.6"><path d="M780.5 756L777 759.5L780.5 763"/><path d="M1084.5 756L1088 759.5L1084.5 763"/></g></svg>
</body></html>
